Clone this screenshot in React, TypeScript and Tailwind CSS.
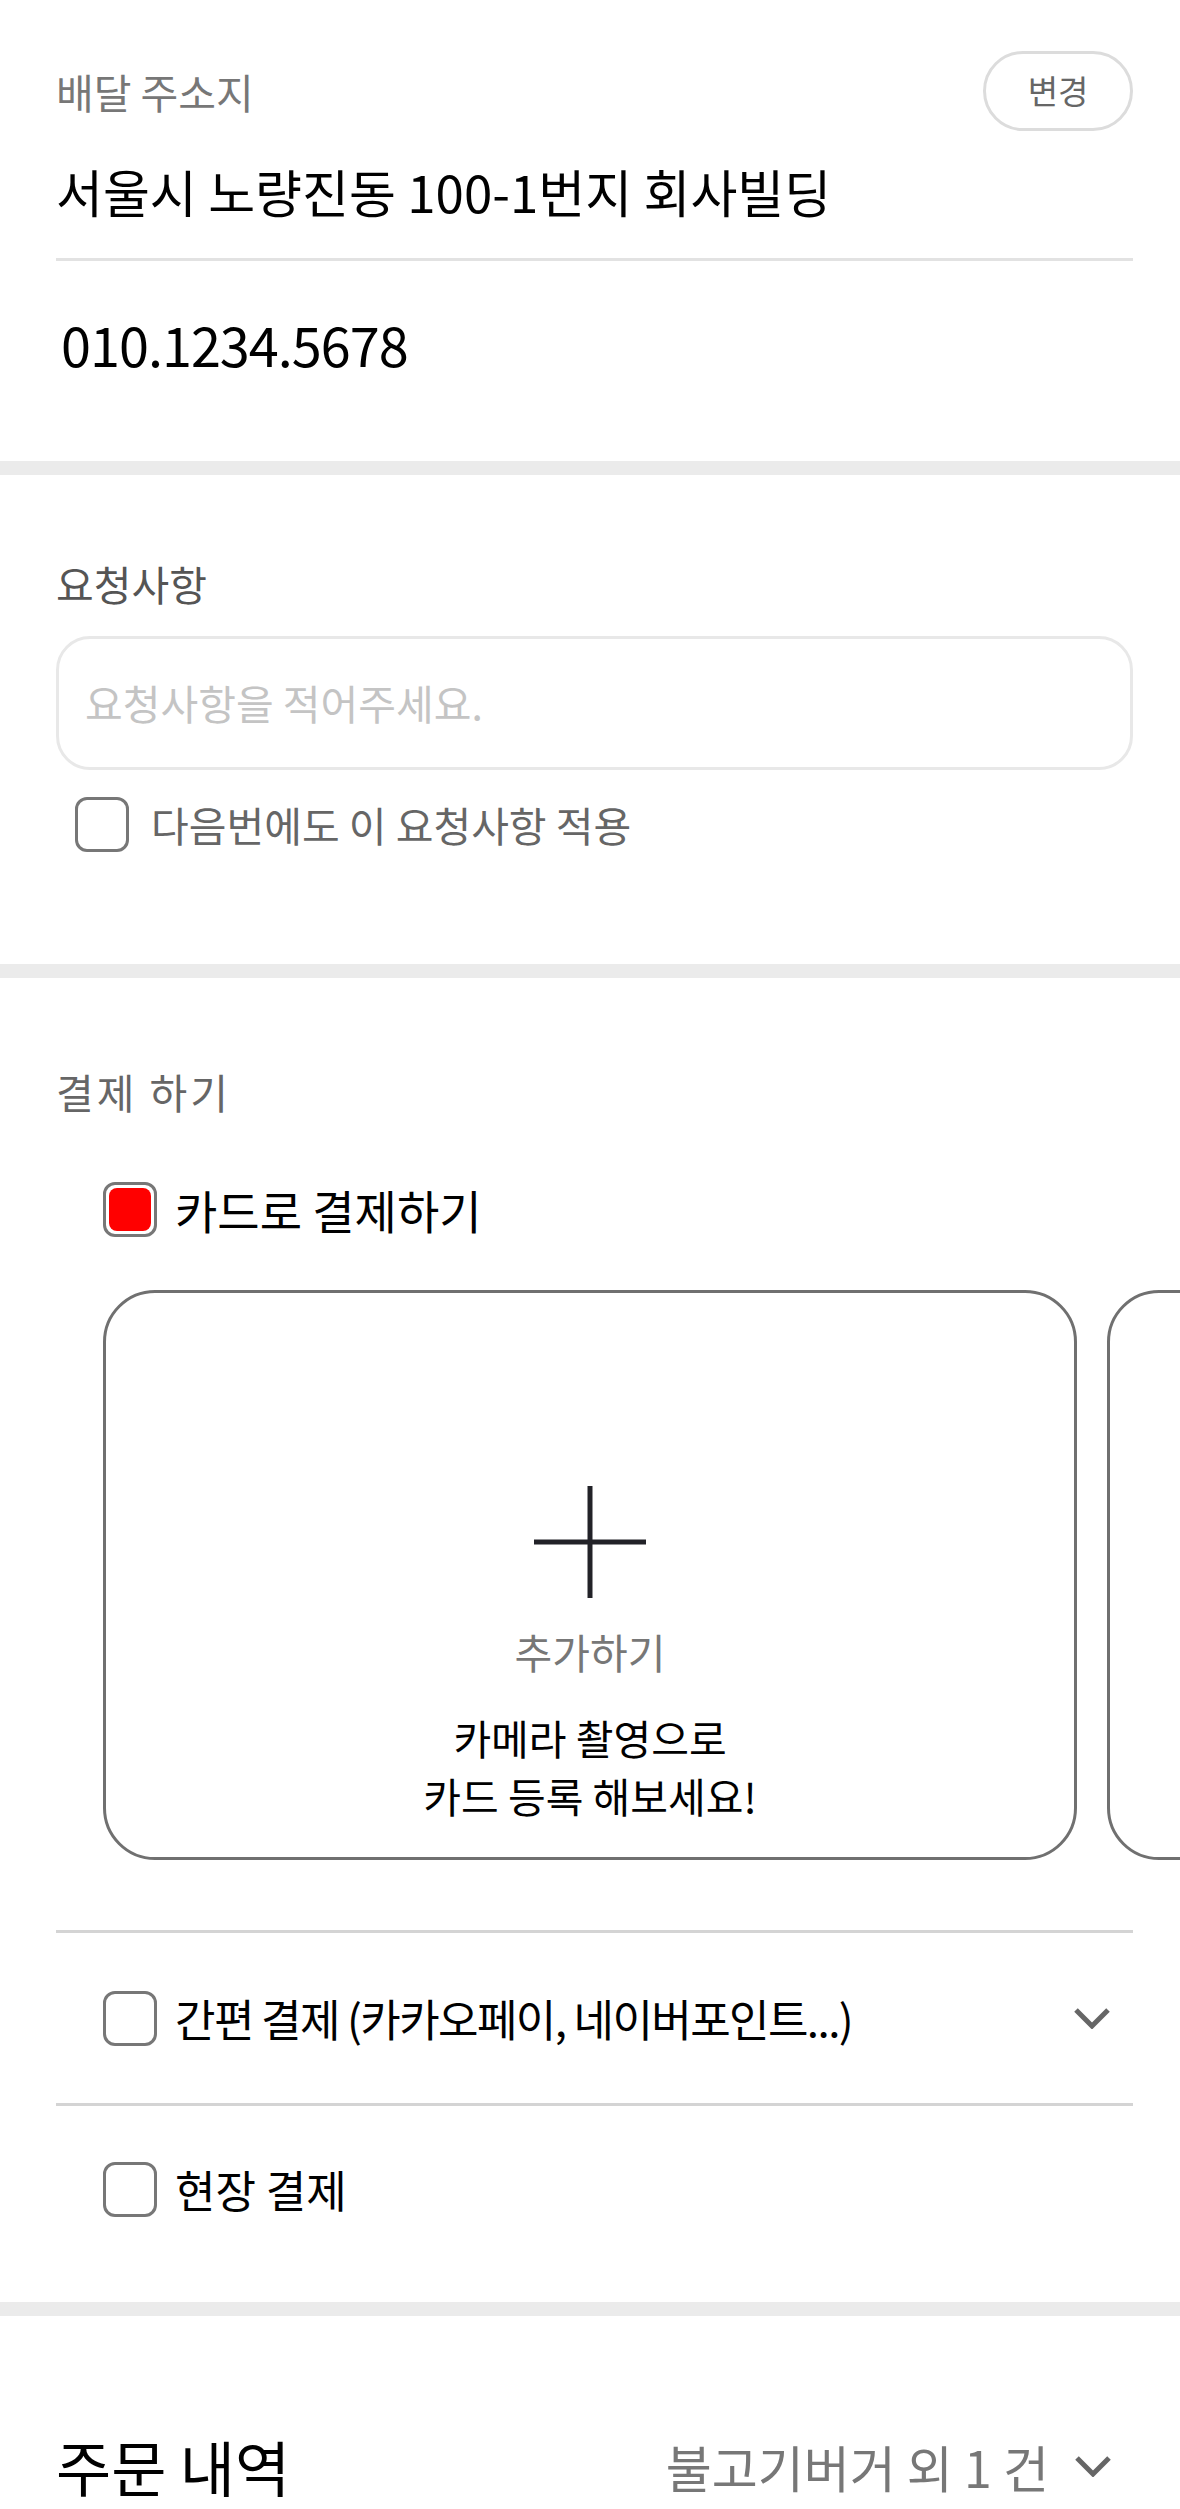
import React from "react";

const font = {
  fontFamily: '"Noto Sans CJK KR", "Noto Sans", sans-serif',
};

const Chevron = () => (
  <svg width="36" height="22" viewBox="0 0 36 22" fill="none">
    <polyline
      points="2,3 18,19 34,3"
      stroke="#666666"
      strokeWidth="5"
      fill="none"
    />
  </svg>
);

const Box = ({ checked = false }: { checked?: boolean }) => (
  <div className="w-[54px] h-[55px] shrink-0 rounded-[12px] border-[3px] border-[#777777] p-[3px] bg-white">
    {checked && <div className="w-full h-full rounded-[8px] bg-[#ff0000]" />}
  </div>
);

const Band = () => <div className="h-[14px] bg-[#ebebeb]" />;

const App = () => {
  return (
    <div className="w-[1180px] bg-white overflow-hidden" style={font}>
      {/* 배달 주소지 */}
      <section className="h-[461px] pl-[56px] pr-[47px] pt-[51px]">
        <div className="flex items-center justify-between">
          <span className="text-[41px] leading-[46px] text-[#777777]">배달 주소지</span>
          <button className="w-[150px] h-[80px] rounded-full border-[3px] border-[#dcdcdc] text-[33px] text-[#666666]">
            변경
          </button>
        </div>
        <div className="h-[127px] pb-[6px] flex items-center text-[51px] text-black">
          서울시 노량진동 100-1번지 회사빌딩
        </div>
        <div className="h-[3px] bg-[#e2e2e2]" />
        <div className="h-[164px] flex items-center pl-[5px] text-[54px] text-black tracking-[-1px]">
          010.1234.5678
        </div>
      </section>
      <Band />

      {/* 요청사항 */}
      <section className="h-[489px] pl-[56px] pr-[47px] pt-[85px]">
        <div className="text-[41px] leading-[46px] text-[#555555]">요청사항</div>
        <div className="mt-[30px] h-[134px] rounded-[34px] border-[3px] border-[#e8e8e8] flex items-center pl-[26px] text-[41px] text-[#c4c4c4]">
          요청사항을 적어주세요.
        </div>
        <div className="mt-[27px] ml-[19px] flex items-center gap-[22px]">
          <Box />
          <span className="text-[41px] leading-[55px] text-[#666666]">
            다음번에도 이 요청사항 적용
          </span>
        </div>
      </section>
      <Band />

      {/* 결제 하기 */}
      <section className="h-[1324px] pl-[56px] pr-[47px] pt-[90px]">
        <div className="text-[41px] leading-[46px] text-[#666666] tracking-[3px]">결제 하기</div>
        <div className="mt-[68px] ml-[47px] flex items-center gap-[18px]">
          <Box checked />
          <span className="text-[46px] leading-[55px] text-black">카드로 결제하기</span>
        </div>
        <div className="mt-[53px] -mr-[47px] pl-[47px] flex gap-[30px] overflow-hidden">
          <div className="w-[974px] h-[570px] shrink-0 rounded-[52px] border-[3px] border-[#707070] flex flex-col items-center pt-[193px]">
            <svg width="112" height="112" viewBox="0 0 112 112">
              <line x1="56" y1="0" x2="56" y2="112" stroke="#222228" strokeWidth="5" />
              <line x1="0" y1="56" x2="112" y2="56" stroke="#222228" strokeWidth="5" />
            </svg>
            <div className="mt-[30px] text-[41px] leading-[46px] text-[#777777]">추가하기</div>
            <div className="mt-[34px] text-center text-[41px] leading-[58px] text-black">
              카메라 촬영으로
              <br />
              카드 등록 해보세요!
            </div>
          </div>
          <div className="w-[974px] h-[570px] shrink-0 rounded-[52px] border-[3px] border-[#707070]" />
        </div>
        <div className="mt-[70px] h-[3px] bg-[#d4d4d4]" />
        <div className="h-[170px] flex items-center pl-[47px] pr-[23px]">
          <Box />
          <span className="ml-[18px] text-[44px] leading-[55px] text-black tracking-[-1.6px] flex-1">
            간편 결제 (카카오페이, 네이버포인트...)
          </span>
          <Chevron />
        </div>
        <div className="h-[3px] bg-[#d4d4d4]" />
        <div className="h-[166px] flex items-center pl-[47px]">
          <Box />
          <span className="ml-[18px] text-[44px] leading-[55px] text-black">현장 결제</span>
        </div>
      </section>
      <Band />

      {/* 주문 내역 */}
      <section className="h-[400px] pl-[56px] pr-[69px] pt-[118px]">
        <div className="flex items-center justify-between">
          <span className="text-[60px] leading-[64px] text-black">주문 내역</span>
          <div className="flex items-center gap-[26px]">
            <span className="text-[50px] leading-[64px] text-[#777777]">불고기버거 외 1 건</span>
            <Chevron />
          </div>
        </div>
      </section>
    </div>
  );
};

export default App;
